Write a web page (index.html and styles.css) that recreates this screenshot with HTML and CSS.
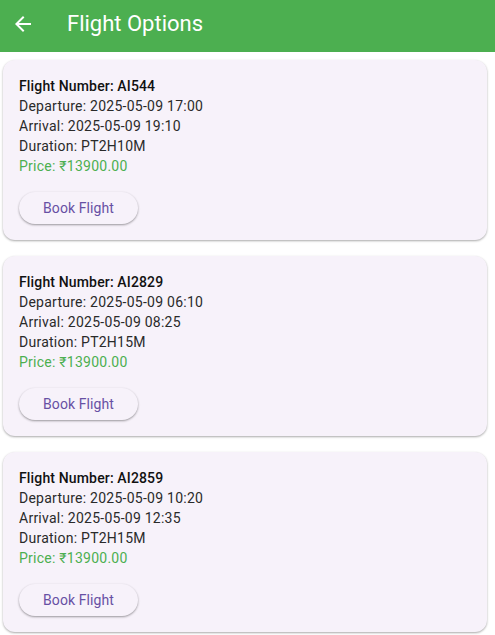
FILE: index.html
```html
<!DOCTYPE html>
<html>
<head>
<meta charset="utf-8">
<link rel="stylesheet" href="styles.css">
</head>
<body>
<header class="appbar">
  <svg class="back" width="24" height="24" viewBox="0 0 24 24"><path d="M20 11H7.83l5.59-5.59L12 4l-8 8 8 8 1.41-1.41L7.83 13H20v-2z" fill="#fff"/></svg>
  <h1 class="title">Flight Options</h1>
</header>
<main class="list">
  <section class="card">
    <div class="num">Flight Number: AI544</div>
    <div class="line">Departure: 2025-05-09 17:00</div>
    <div class="line">Arrival: 2025-05-09 19:10</div>
    <div class="line">Duration: PT2H10M</div>
    <div class="price">Price: ₹13900.00</div>
    <button class="book">Book Flight</button>
  </section>
  <section class="card">
    <div class="num">Flight Number: AI2829</div>
    <div class="line">Departure: 2025-05-09 06:10</div>
    <div class="line">Arrival: 2025-05-09 08:25</div>
    <div class="line">Duration: PT2H15M</div>
    <div class="price">Price: ₹13900.00</div>
    <button class="book">Book Flight</button>
  </section>
  <section class="card">
    <div class="num">Flight Number: AI2859</div>
    <div class="line">Departure: 2025-05-09 10:20</div>
    <div class="line">Arrival: 2025-05-09 12:35</div>
    <div class="line">Duration: PT2H15M</div>
    <div class="price">Price: ₹13900.00</div>
    <button class="book">Book Flight</button>
  </section>
</main>
</body>
</html>
```
FILE: styles.css
```css
* { box-sizing: border-box; }
html, body { margin: 0; padding: 0; }
body {
  font-family: Roboto, "Noto Sans", sans-serif;
  background: #fff;
  width: 495px;
  height: 635px;
  overflow: hidden;
}
.appbar {
  height: 52px;
  background: #4caf50;
  display: flex;
  align-items: center;
  padding-left: 11px;
}
.back { display: block; margin-bottom: 4px; }
.title {
  margin: 0 0 5px 32px;
  font-size: 22px;
  font-weight: 400;
  color: #fff;
  line-height: 1;
}
.list {
  display: flex;
  flex-direction: column;
  gap: 16px;
  padding: 8px 8px 0 3px;
}
.card {
  background: #f7f2fa;
  border-radius: 12px;
  padding: 16px;
  height: 180px;
  box-shadow: 0 1px 2px rgba(0,0,0,0.25), 0 1px 3px rgba(0,0,0,0.1);
  display: flex;
  flex-direction: column;
  align-items: flex-start;
}
.num, .line, .price {
  font-size: 14px;
  line-height: 20px;
  letter-spacing: 0.25px;
  color: #1d1b20;
}
.num { font-weight: 500; color: #111; letter-spacing: 0.15px; }
.line { color: #2a2a2a; }
.price { color: #4caf50; }
.book {
  margin-top: 16px;
  height: 32px;
  width: 119px;
  border: none;
  border-radius: 16px;
  background: #f7f2fa;
  color: #6750a4;
  font-family: Roboto, sans-serif;
  font-size: 14px;
  font-weight: 400;
  letter-spacing: 0.1px;
  box-shadow: 0 1px 2px rgba(0,0,0,0.28), 0 1px 3px rgba(0,0,0,0.12);
  padding: 0;
}
```
